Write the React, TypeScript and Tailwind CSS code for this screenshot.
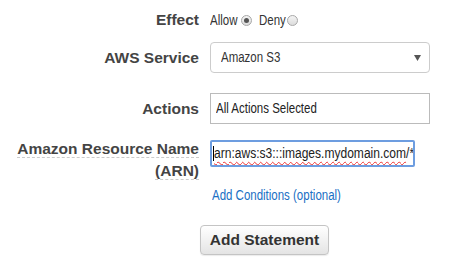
function Narrow({ children, className = "" }: { children: React.ReactNode; className?: string }) {
  return (
    <span className={"inline-block origin-left scale-x-[0.82] whitespace-nowrap " + className}>{children}</span>
  );
}

export default function App() {
  const label = "w-[199px] shrink-0 text-right text-[15.5px] font-bold text-[#444]";

  return (
    <main
      className="w-[451px] h-[261px] bg-white pt-[8px]"
      style={{ fontFamily: '"Liberation Sans", Arial, sans-serif' }}
    >
      {/* Effect */}
      <div className="flex items-center h-[24px]">
        <div className={label}>Effect</div>
        <div className="ml-[11px] flex items-center text-[14px] text-[#333]">
          <span className="w-[28px]"><Narrow>Allow</Narrow></span>
          <span className="ml-[3px] w-[11px] h-[11px] rounded-full border border-[#a8a8a8] bg-gradient-to-b from-[#f4f4f4] to-[#dcdcdc] flex items-center justify-center">
            <span className="w-[5px] h-[5px] rounded-full bg-[#555]" />
          </span>
          <span className="ml-[7px] w-[25px]"><Narrow>Deny</Narrow></span>
          <span className="ml-[3px] w-[11px] h-[11px] rounded-full border border-[#a8a8a8] bg-gradient-to-b from-[#f4f4f4] to-[#dcdcdc]" />
        </div>
      </div>

      {/* AWS Service */}
      <div className="flex items-center mt-[10px]">
        <div className={label}>AWS Service</div>
        <div className="ml-[11px] w-[220px] h-[31px] rounded-[4px] border border-[#ccc] bg-white flex items-center pl-[10px] pr-[8px] text-[14px] text-[#333]">
          <span className="flex-1"><Narrow>Amazon S3</Narrow></span>
          <svg width="7" height="6" viewBox="0 0 7 6">
            <path d="M0 0 H7 L3.5 6 Z" fill="#555" />
          </svg>
        </div>
      </div>

      {/* Actions */}
      <div className="flex items-center mt-[20px]">
        <div className={label}>Actions</div>
        <div className="ml-[11px] w-[220px] h-[31px] border border-[#bbb] bg-white flex items-center pl-[5px] text-[14px] text-[#222]">
          <Narrow>All Actions Selected</Narrow>
        </div>
      </div>

      {/* ARN */}
      <div className="flex items-start mt-[16px]">
        <div className={label + " leading-[22px] -mt-[2px]"}>
          <span className="border-b border-dashed border-[#ccc]">Amazon Resource Name</span>
          <br />
          <span className="border-b border-dashed border-[#ccc]">(ARN)</span>
        </div>
        <div className="ml-[11px] w-[205px] h-[27px] border-2 border-[#6d9de0] rounded-[2px] bg-white flex items-center pl-[1px] text-[14px] text-[#222] overflow-hidden">
          <span className="w-px h-[15px] bg-black shrink-0" />
          <Narrow className="scale-x-[0.86]">
            <span className="underline decoration-wavy decoration-[#e33] decoration-1 underline-offset-[3px]">arn:aws:s3:::images.mydomain.com</span>/*
          </Narrow>
        </div>
      </div>

      {/* Add conditions */}
      <div className="pl-[212px] mt-[3px] text-[14px] text-[#1a6fc4] leading-[20px]">
        <Narrow>Add Conditions (optional)</Narrow>
      </div>

      {/* Button */}
      <div className="pl-[200px] mt-[20px]">
        <button className="w-[129px] h-[30px] rounded-[4px] border border-[#c4c4c4] bg-gradient-to-b from-white to-[#e4e4e4] text-[15.5px] font-bold text-[#333] shadow-[0_1px_1px_rgba(0,0,0,0.08)]">
          Add Statement
        </button>
      </div>
    </main>
  );
}
